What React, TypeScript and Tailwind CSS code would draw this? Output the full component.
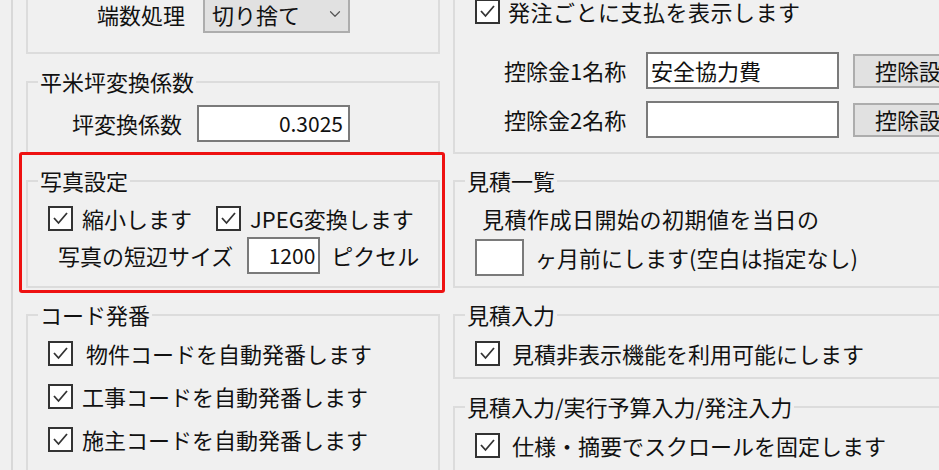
import { ChevronDown } from 'lucide-react';

function Check({ className = '' }: { className?: string }) {
  return (
    <span className={`flex h-[25px] w-[25px] shrink-0 items-center justify-center border-2 border-[#333333] bg-white ${className}`}>
      <svg width="19" height="19" viewBox="0 0 19 19" fill="none">
        <polyline points="3,9 7.5,14 16,4" stroke="#333333" strokeWidth="1.8" />
      </svg>
    </span>
  );
}

function GroupBox({ title, boxClass, children }: { title: string; boxClass: string; children?: React.ReactNode }) {
  return (
    <div className="relative pt-[12px]">
      <div className={`border-2 border-[#dcdcdc] ${boxClass}`}>{children}</div>
      <span className="absolute left-[12px] top-0 bg-[#f0f0f0] px-[2px] text-[22px] leading-[24px] text-[#111]">
        {title}
      </span>
    </div>
  );
}

function CheckRow({ label, className = '', textClass = '' }: { label: string; className?: string; textClass?: string }) {
  return (
    <div className={`flex h-[25px] items-center ${className}`}>
      <Check />
      <span className={`whitespace-nowrap text-[22px] leading-[25px] ${textClass}`}>{label}</span>
    </div>
  );
}

export default function App() {
  return (
    <div className="relative flex h-[470px] w-[939px] overflow-hidden bg-[#f0f0f0] font-['Noto_Sans_CJK_JP','Noto_Sans',sans-serif] text-[#111]">
      {/* outer panel edge */}
      <div className="h-full w-[13px] shrink-0 border-r-2 border-[#d8d8d8]" />

      {/* left column */}
      <div className="ml-[13px] w-[414px] shrink-0">
        <div className="-mt-[40px] h-[94px] border-2 border-[#dcdcdc] pt-[33px]">
          <div className="flex items-center">
            <span className="w-[157px] whitespace-nowrap text-right text-[22px] leading-[25px]">端数処理</span>
            <div className="ml-[18px] flex h-[38px] w-[147px] items-center justify-between border-2 border-[#adadad] bg-[#e1e1e1] pl-[7px] pr-[4px]">
              <span className="text-[22px] leading-[25px]">切り捨て</span>
              <ChevronDown className="h-[18px] w-[18px] text-[#555]" strokeWidth={1.6} />
            </div>
          </div>
        </div>

        <div className="mt-[15px]">
          <GroupBox title="平米坪変換係数" boxClass="h-[73px] pt-[22px]">
            <div className="flex items-center">
              <span className="w-[154px] whitespace-nowrap text-right text-[22px] leading-[25px]">坪変換係数</span>
              <div className="ml-[15px] flex h-[37px] w-[153px] items-center justify-end border-2 border-[#7a7a7a] bg-white pr-[5px] text-[21px] leading-[25px]">
                0.3025
              </div>
            </div>
          </GroupBox>
        </div>

        <div className="mt-[14px]">
          <GroupBox title="写真設定" boxClass="h-[108px] pt-[24px] pl-[20px]">
            <div className="flex items-center">
              <CheckRow label="縮小します" textClass="ml-[9px]" />
              <CheckRow label="JPEG変換します" className="ml-[24px]" textClass="ml-[9px]" />
            </div>
            <div className="mt-[6px] flex items-center pl-[10px]">
              <span className="whitespace-nowrap text-[22px] leading-[25px]">写真の短辺サイズ</span>
              <div className="ml-[14px] flex h-[37px] w-[73px] items-center justify-end border-2 border-[#7a7a7a] bg-white pr-[3px] text-[21px] leading-[25px]">
                1200
              </div>
              <span className="ml-[11px] whitespace-nowrap text-[22px] leading-[25px]">ピクセル</span>
            </div>
          </GroupBox>
        </div>

        <div className="mt-[14px]">
          <GroupBox title="コード発番" boxClass="h-[200px] pt-[25px] pl-[20px]">
            <div className="flex flex-col gap-[18px]">
              <CheckRow label="物件コードを自動発番します" textClass="ml-[13px]" />
              <CheckRow label="工事コードを自動発番します" textClass="ml-[9px]" />
              <CheckRow label="施主コードを自動発番します" textClass="ml-[9px]" />
            </div>
          </GroupBox>
        </div>
      </div>

      {/* right column */}
      <div className="ml-[13px] w-[520px] shrink-0">
        <div className="-mt-[40px] h-[194px] border-2 border-[#dcdcdc] pl-[20px] pt-[37px]">
          <CheckRow label="発注ごとに支払を表示します" textClass="ml-[8px] tracking-[0.5px]" />
          <div className="mt-[28px] flex items-center pl-[29px]">
            <span className="w-[145px] whitespace-nowrap text-[22px] leading-[25px]">控除金1名称</span>
            <div className="flex h-[37px] w-[197px] items-center border-2 border-[#7a7a7a] bg-white pl-[3px] text-[22px] leading-[25px]">
              安全協力費
            </div>
            <div className="ml-[14px] flex h-[34px] w-[120px] items-center whitespace-nowrap border-2 border-[#adadad] bg-[#e1e1e1] pl-[20px] text-[22px] leading-[25px]">
              控除設定
            </div>
          </div>
          <div className="mt-[12px] flex items-center pl-[29px]">
            <span className="w-[145px] whitespace-nowrap text-[22px] leading-[25px]">控除金2名称</span>
            <div className="h-[37px] w-[197px] border-2 border-[#7a7a7a] bg-white" />
            <div className="ml-[14px] flex h-[34px] w-[120px] items-center whitespace-nowrap border-2 border-[#adadad] bg-[#e1e1e1] pl-[20px] text-[22px] leading-[25px]">
              控除設定
            </div>
          </div>
        </div>

        <div className="mt-[14px]">
          <GroupBox title="見積一覧" boxClass="h-[108px] pt-[24px]">
            <div className="whitespace-nowrap pl-[27px] text-[22px] leading-[25px] tracking-[0.5px]">見積作成日開始の初期値を当日の</div>
            <div className="mt-[8px] flex items-center pl-[20px]">
              <div className="h-[37px] w-[49px] border-2 border-[#7a7a7a] bg-white" />
              <span className="ml-[11px] whitespace-nowrap text-[22px] leading-[25px]">ヶ月前にします(空白は指定なし)</span>
            </div>
          </GroupBox>
        </div>

        <div className="mt-[14px]">
          <GroupBox title="見積入力" boxClass="h-[65px] pt-[25px] pl-[20px]">
            <CheckRow label="見積非表示機能を利用可能にします" textClass="ml-[12px]" />
          </GroupBox>
        </div>

        <div className="mt-[15px]">
          <GroupBox title="見積入力/実行予算入力/発注入力" boxClass="h-[100px] pt-[25px] pl-[20px]">
            <CheckRow label="仕様・摘要でスクロールを固定します" textClass="ml-[12px]" />
          </GroupBox>
        </div>
      </div>

      {/* highlight annotation */}
      <div className="pointer-events-none absolute left-[19px] top-[152px] h-[141px] w-[426px] rounded-[3px] border-[3px] border-[#ee1111]" />
    </div>
  );
}
